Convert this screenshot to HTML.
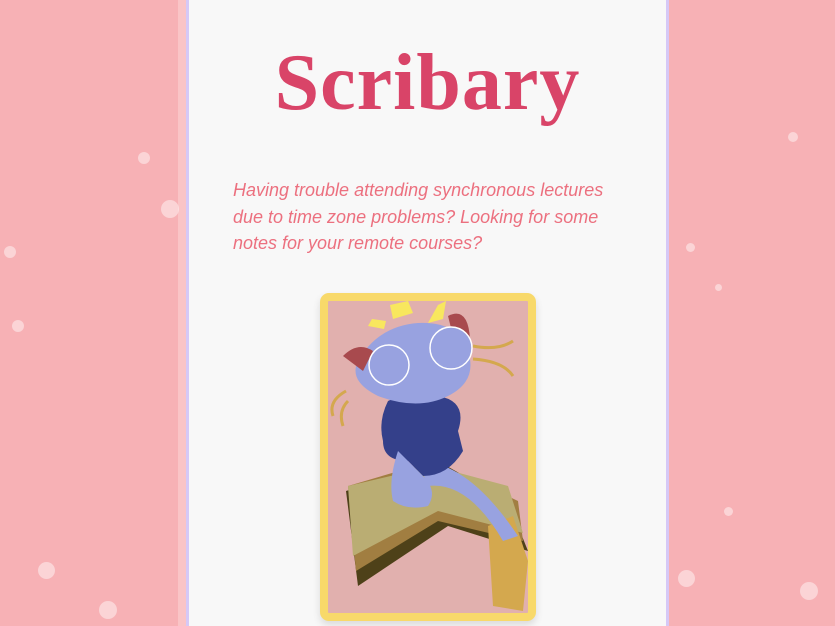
<!DOCTYPE html>
<html><head><style>
html,body{margin:0;padding:0}
body{width:835px;height:626px;overflow:hidden;background:#f7b1b5;position:relative;font-family:"Liberation Sans",sans-serif}
.strip{position:absolute;left:178px;top:0;width:8px;height:626px;background:#fac4c6}
.panel{position:absolute;left:186px;top:0;width:477px;height:626px;background:#f8f8f8;border-left:3px solid #d6c8f6;border-right:3px solid #d6c8f6}
h1{position:absolute;left:0;right:0;top:38px;margin:0;text-align:center;font-family:"Liberation Serif",serif;font-weight:bold;font-size:80px;color:#d94468;letter-spacing:1px}
p{position:absolute;left:44px;top:177px;width:382px;margin:0;font-style:italic;font-size:18px;line-height:26.5px;color:#ec707f}
.card{position:absolute;left:131px;top:293px;width:200px;height:312px;border:8px solid #f8d96a;border-radius:9px;background:#e1b0ae;box-shadow:0 4px 8px rgba(0,0,0,.12);overflow:hidden}
.dot{position:absolute;border-radius:50%;background:rgba(255,255,255,.45)}
</style></head><body>
<div class="strip"></div>
<div class="dot" style="left:161px;top:200px;width:18px;height:18px"></div>
<div class="dot" style="left:138px;top:152px;width:12px;height:12px"></div>
<div class="dot" style="left:4px;top:246px;width:12px;height:12px"></div>
<div class="dot" style="left:12px;top:320px;width:12px;height:12px"></div>
<div class="dot" style="left:38px;top:562px;width:17px;height:17px"></div>
<div class="dot" style="left:99px;top:601px;width:18px;height:18px"></div>
<div class="dot" style="left:686px;top:243px;width:9px;height:9px"></div>
<div class="dot" style="left:715px;top:284px;width:7px;height:7px"></div>
<div class="dot" style="left:788px;top:132px;width:10px;height:10px"></div>
<div class="dot" style="left:724px;top:507px;width:9px;height:9px"></div>
<div class="dot" style="left:678px;top:570px;width:17px;height:17px"></div>
<div class="dot" style="left:800px;top:582px;width:18px;height:18px"></div>
<div class="panel">
<h1>Scribary</h1>
<p>Having trouble attending synchronous lectures due to time zone problems? Looking for some notes for your remote courses?</p>
<div class="card">
<svg width="200" height="312" viewBox="0 0 200 312">
<path d="M18 190 L110 160 L180 200 L200 250 L120 225 L30 285 Z" fill="#4e4119"/>
<path d="M20 185 L105 160 L190 200 L195 240 L110 220 L28 270 Z" fill="#a17e41"/>
<path d="M20 185 L105 165 L180 185 L195 232 L110 210 L25 255 Z" fill="#baad73"/>
<path d="M160 225 L185 215 L200 260 L195 310 L165 305 Z" fill="#d4a84e"/>
<path d="M90 160 Q140 160 190 235 L175 240 Q140 180 100 185 Z" fill="#98a2e0"/>
<path d="M60 100 Q80 90 110 95 Q140 100 130 130 L135 150 Q120 175 95 175 L80 160 Q55 160 55 140 Q50 120 60 100Z" fill="#34408a"/>
<path d="M70 150 L95 175 Q110 190 100 205 Q80 210 65 200 Q60 180 70 150Z" fill="#98a2e0"/>
<path d="M30 60 Q50 25 90 22 Q130 20 140 50 Q150 80 120 95 Q90 110 50 95 Q20 80 30 60Z" fill="#98a2e0"/>
<path d="M15 55 Q30 40 45 50 L35 70 Z" fill="#a84a4e"/><path d="M120 15 Q140 5 142 38 L125 35Z" fill="#a84a4e"/>
<path d="M62 4 L80 0 L85 12 L65 18Z M44 18 L58 20 L56 28 L40 25Z M110 4 L118 0 L115 18 L100 22Z" fill="#f8e75e"/>
<circle cx="61" cy="64" r="20" fill="#98a2e0" stroke="#fff" stroke-width="1.5"/>
<circle cx="123" cy="47" r="21" fill="#98a2e0" stroke="#fff" stroke-width="1.5"/>
<path d="M145 45 Q170 50 185 40 M145 58 Q175 60 185 75 M18 90 Q0 100 5 115 M20 100 Q10 110 15 125" stroke="#d4a84e" stroke-width="3" fill="none"/>
</svg>
</div>
</div>
</body></html>
